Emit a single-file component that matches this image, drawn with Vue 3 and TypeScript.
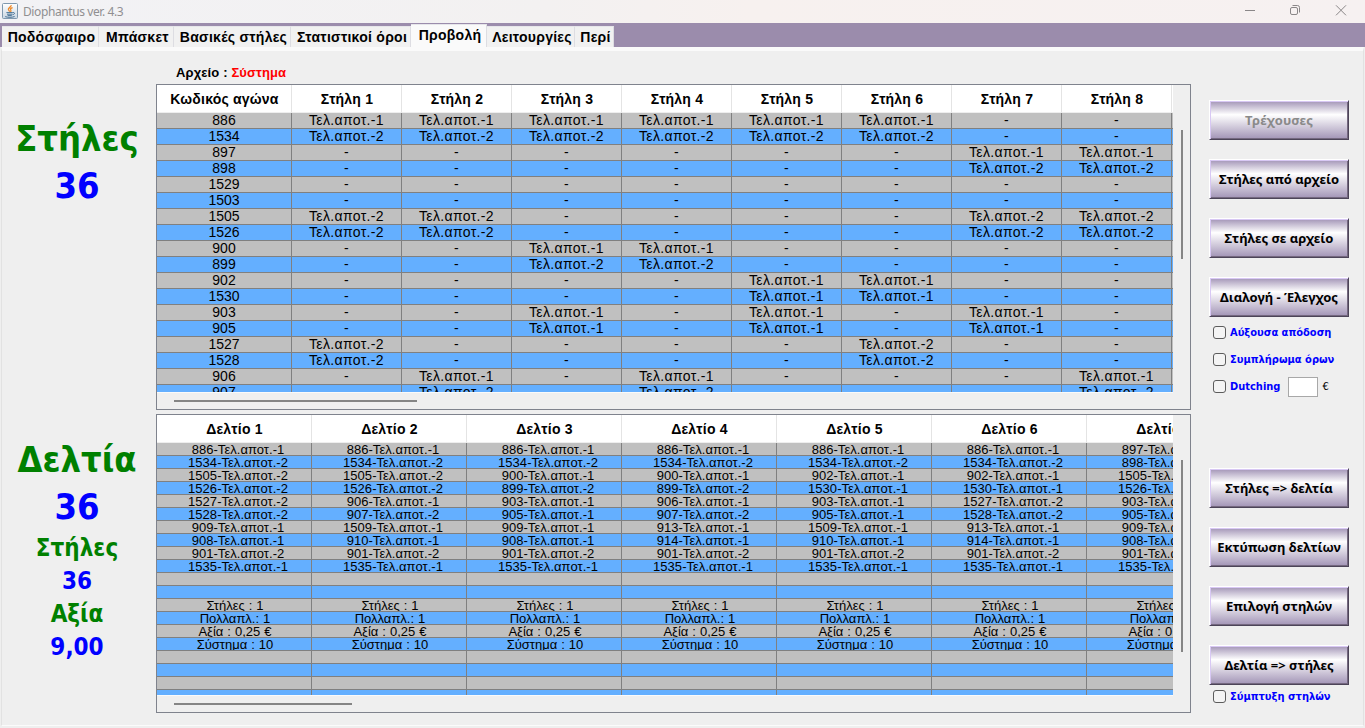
<script setup lang="ts">
const tabs: { label: string; width: number; active?: boolean }[] = [
  { label: 'Ποδόσφαιρο', width: 97 },
  { label: 'Μπάσκετ', width: 75 },
  { label: 'Βασικές στήλες', width: 117 },
  { label: 'Στατιστικοί όροι', width: 120 },
  { label: 'Προβολή', width: 76, active: true },
  { label: 'Λειτουργίες', width: 88 },
  { label: 'Περί', width: 39 },
]

const columnHeads: string[] = ['Κωδικός αγώνα', ...Array.from({ length: 8 }, (_, i) => `Στήλη ${i + 1}`), '']

const picks: [string, string][] = [
  ['886', '111111--'],
  ['1534', '222222--'],
  ['897', '------11'],
  ['898', '------22'],
  ['1529', '--------'],
  ['1503', '--------'],
  ['1505', '22----22'],
  ['1526', '22----22'],
  ['900', '--11----'],
  ['899', '--22----'],
  ['902', '----11--'],
  ['1530', '----11--'],
  ['903', '--1-1-1-'],
  ['905', '--1-1-1-'],
  ['1527', '2----2--'],
  ['1528', '2----2--'],
  ['906', '-1-1---1'],
  ['907', '-2-2---2'],
]
const columnRows: string[][] = picks.map(([code, marks]) => [
  code,
  ...marks.split('').map((m) => (m === '-' ? '-' : `Τελ.αποτ.-${m}`)),
  '',
])

const tickets: string[] = [
  '886-1 1534-2 1505-2 1526-2 1527-2 1528-2 909-1 908-1 901-2 1535-1',
  '886-1 1534-2 1505-2 1526-2 906-1 907-2 1509-1 910-1 901-2 1535-1',
  '886-1 1534-2 900-1 899-2 903-1 905-1 909-1 908-1 901-2 1535-1',
  '886-1 1534-2 900-1 899-2 906-1 907-2 913-1 914-1 901-2 1535-1',
  '886-1 1534-2 902-1 1530-1 903-1 905-1 1509-1 910-1 901-2 1535-1',
  '886-1 1534-2 902-1 1530-1 1527-2 1528-2 913-1 914-1 901-2 1535-1',
  '897-1 898-2 1505-2 1526-2 903-1 905-1 909-1 908-1 901-2 1535-1',
]
const summary: string[] = ['', '', 'Στήλες : 1', 'Πολλαπλ.: 1', 'Αξία : 0,25 €', 'Σύστημα : 10', '', '', '', '']
const ticketColumns: string[][] = tickets.map((t) => [
  ...t.split(' ').map((p) => p.replace('-', '-Τελ.αποτ.-')),
  ...summary,
])
const ticketRows: string[][] = ticketColumns[0].map((_, r) => ticketColumns.map((c) => c[r]))
</script>

<template>
  <div class="window">
    <header class="titlebar">
      <svg class="app-icon" width="16" height="16" viewBox="0 0 16 16">
        <defs>
          <linearGradient id="cup" x1="0" y1="0" x2="0" y2="1">
            <stop offset="0" stop-color="#ffffff" />
            <stop offset="1" stop-color="#c9d6e2" />
          </linearGradient>
        </defs>
        <rect x="0.5" y="0.5" width="15" height="15" rx="1" fill="url(#cup)" stroke="#7f98ae" />
        <path d="M9.2 2.2C9.6 4 5.8 4.8 6.4 6.6C6.7 7.5 7.6 7.9 7.7 8.8M10.6 4.6C8.6 5.2 8 6.1 8.8 7.1C9.2 7.7 8.9 8.3 8.5 8.8" fill="none" stroke="#ee8a2a" stroke-width="1.3" />
        <path d="M4.4 9.6H10.8M5 11.2H10.4M5.6 12.6H9.8M10.8 9.6C13.4 9 12.8 11.6 10.6 11.7M3.2 13.6C5.6 14.6 10.4 14.5 12.6 13.5" fill="none" stroke="#4a7396" stroke-width="1" />
      </svg>
      <span class="title">Diophantus ver. 4.3</span>
      <svg class="win-buttons" width="106" height="14" viewBox="0 0 106 14" fill="none" stroke="#8a8788">
        <path d="M1 7.5H11" />
        <rect x="46.5" y="4.5" width="7" height="7" rx="1.5" />
        <path d="M48.5 2.5H53.5Q55.5 2.5 55.5 4.5V9.5" />
        <path d="M92 2.3L102 12.3M102 2.3L92 12.3" />
      </svg>
    </header>

    <nav class="tabs">
      <div v-for="t in tabs" :key="t.label" class="tab" :class="{ active: t.active }" :style="{ width: t.width + 'px' }">
        {{ t.label }}
      </div>
    </nav>

    <main class="panel">
      <aside class="totals">
        <div class="big green">Στήλες</div>
        <div class="big blue">36</div>
        <div class="big green second">Δελτία</div>
        <div class="big blue">36</div>
        <div class="mid green first">Στήλες</div>
        <div class="mid blue">36</div>
        <div class="mid green">Αξία</div>
        <div class="mid blue">9,00</div>
      </aside>

      <section class="tables">
        <div class="file"><span>Αρχείο : </span><span class="red">Σύστημα</span></div>

        <div class="scrollpane columns">
          <div class="viewport">
            <div class="row head">
              <div v-for="(h, i) in columnHeads" :key="i" class="cell">{{ h }}</div>
            </div>
            <div v-for="(r, i) in columnRows" :key="i" class="row">
              <div v-for="(c, j) in r" :key="j" class="cell">{{ c }}</div>
            </div>
          </div>
          <div class="vtrack"><div class="thumb"></div></div>
          <div class="htrack"><div class="thumb"></div></div>
        </div>

        <div class="scrollpane tickets">
          <div class="viewport">
            <div class="row head">
              <div v-for="n in 7" :key="n" class="cell">Δελτίο {{ n }}</div>
            </div>
            <div v-for="(r, i) in ticketRows" :key="i" class="row" :class="{ pick: i < 10 }">
              <div v-for="(c, j) in r" :key="j" class="cell">{{ c }}</div>
            </div>
          </div>
          <div class="vtrack"><div class="thumb"></div></div>
          <div class="htrack"><div class="thumb"></div></div>
        </div>
      </section>

      <aside class="actions">
        <button class="btn" disabled>Τρέχουσες</button>
        <button class="btn">Στήλες από αρχείο</button>
        <button class="btn">Στήλες σε αρχείο</button>
        <button class="btn b4">Διαλογή - Έλεγχος</button>
        <div class="checks">
          <label class="check"><i class="box"></i><span>Αύξουσα απόδοση</span></label>
          <label class="check"><i class="box"></i><span>Συμπλήρωμα όρων</span></label>
          <label class="check"><i class="box"></i><span>Dutching</span><i class="amount"></i><span class="euro">€</span></label>
        </div>
        <button class="btn">Στήλες =&gt; δελτία</button>
        <button class="btn">Εκτύπωση δελτίων</button>
        <button class="btn">Επιλογή στηλών</button>
        <button class="btn b8">Δελτία =&gt; στήλες</button>
        <label class="check"><i class="box"></i><span>Σύμπτυξη στηλών</span></label>
      </aside>
    </main>
  </div>
</template>

<style>
html,
body {
  margin: 0;
  overflow: hidden;
}
</style>

<style scoped>
.window {
  width: 1365px;
  height: 728px;
  background: #efefef;
  display: flex;
  flex-direction: column;
  overflow: hidden;
  color: #000;
  box-sizing: border-box;
}
.window * {
  box-sizing: border-box;
}
.titlebar {
  height: 23px;
  flex: none;
  display: flex;
  align-items: center;
  padding: 0 15px 0 2px;
  background: linear-gradient(90deg, #f2f2f5 0%, #f3f1f1 40%, #f7f1ef 55%, #f6f1f1 100%);
}
.app-icon {
  margin-top: -1px;
}
.title {
  margin-left: 5px;
  font: 12px/22px "Noto Sans", sans-serif;
  letter-spacing: -0.4px;
  color: #908f91;
  flex: 1;
}
.win-buttons {
  margin-top: -3px;
}
.tabs {
  height: 24px;
  flex: none;
  background: #9b8cac;
  padding-left: 2px;
  display: flex;
  align-items: flex-end;
}
.tab {
  height: 21px;
  padding-left: 3px;
  background: #f1f1f1;
  border-right: 1px solid #dddde2;
  border-top: 1px solid #e6e6ea;
  font: bold 14px/21px "Liberation Sans", sans-serif;
  letter-spacing: 0.27px;
  text-align: center;
  white-space: nowrap;
}
.tab.active {
  height: 23px;
  background: #fafafa;
}
.panel {
  flex: 1;
  display: flex;
  margin: 0 1px 2px 1px;
  border: 1px solid #e2e2e2;
  border-top: 4px solid #fafafa;
  border-bottom-color: #fbfbfb;
}
.totals {
  width: 154px;
  flex: none;
  text-align: center;
  font-family: "DejaVu Sans Condensed", "DejaVu Sans", sans-serif;
  font-stretch: condensed;
  font-weight: bold;
  padding: 65px 4px 0 0;
}
.big {
  font-size: 36px;
  line-height: 46px;
  height: 47px;
}
.mid {
  font-size: 24px;
  line-height: 33px;
  height: 33px;
}
.first {
  margin-top: 1px;
}
.second {
  margin-top: 227px;
}
.green {
  color: #008000;
}
.blue {
  color: #0000ff;
}
.tables {
  width: 1035px;
  flex: none;
  padding-top: 14px;
}
.file {
  height: 19px;
  padding-left: 20px;
  font: bold 13px/16px "Liberation Sans", sans-serif;
  letter-spacing: 0.13px;
  white-space: pre;
}
.red {
  color: #f00;
}
.scrollpane {
  border: 1px solid #7f838d;
  display: grid;
  grid-template-columns: 1016px 1fr;
  font-family: "Liberation Sans", sans-serif;
}
.columns {
  height: 326px;
  grid-template-rows: 307px 1fr;
}
.tickets {
  height: 299px;
  margin-top: 4px;
  grid-template-rows: 280px 1fr;
}
.viewport {
  overflow: hidden;
  box-shadow: 0 1px 0 #fafafa;
}
.row {
  display: flex;
  width: max-content;
  background: #c0c0c0;
}
.row:nth-child(odd) {
  background: #64afff;
}
.cell {
  border-right: 1px solid #808080;
  border-bottom: 1px solid #808080;
  text-align: center;
  white-space: nowrap;
  overflow: hidden;
}
.columns .cell {
  width: 110px;
  height: 16px;
  font-size: 14px;
  line-height: 15px;
  letter-spacing: 0.35px;
}
.columns .cell:first-child {
  width: 135px;
  letter-spacing: 0;
}
.tickets .cell {
  width: 155px;
  height: 13px;
  padding-left: 2px;
  font-size: 13px;
  line-height: 13px;
  letter-spacing: 0;
  word-spacing: 0.4px;
}
.tickets .pick .cell {
  padding-left: 8px;
  letter-spacing: 0.03px;
}
.row.head {
  background: #fff;
}
.row.head .cell,
.row.head .cell:first-child {
  height: 28px;
  padding-left: 1px;
  font-size: 14px;
  line-height: 29px;
  font-weight: bold;
  letter-spacing: 0.2px;
  word-spacing: 0;
  border-bottom: 1px solid #eee;
  border-right: 1px solid #e4e4e4;
}
.vtrack {
  padding-left: 8px;
}
.vtrack .thumb {
  width: 2px;
  background: #858585;
}
.htrack {
  padding: 8px 0 0 17px;
}
.htrack .thumb {
  height: 2px;
  background: #858585;
}
.columns .vtrack .thumb {
  height: 129px;
  margin-top: 45px;
}
.columns .htrack .thumb {
  width: 243px;
}
.tickets .vtrack .thumb {
  height: 192px;
  margin-top: 45px;
}
.tickets .htrack .thumb {
  width: 178px;
}
.actions {
  flex: 1;
  padding: 49px 0 0 18px;
  display: flex;
  flex-direction: column;
  align-items: flex-start;
}
.btn {
  width: 140px;
  height: 40px;
  flex: none;
  margin: 0 0 19px;
  padding: 0;
  border: 1px solid #fff;
  border-right: 1px solid #4c4458;
  border-bottom: 1px solid #4c4458;
  box-shadow: inset 1px 1px 0 #d8c8f4, inset -1px -1px 0 #74687f;
  background: linear-gradient(180deg, #a294b6 0%, #ffffff 36%, #a294b6 100%);
  font: bold 13px/36px "Noto Sans", sans-serif;
  color: #000;
  white-space: nowrap;
}
.btn:disabled {
  color: #8a8a8a;
  letter-spacing: 0.1px;
}
.b4 {
  margin-bottom: 2px;
}
.checks {
  height: 149px;
}
.check {
  display: flex;
  align-items: center;
  height: 27px;
  padding-left: 4px;
  font: bold 11px/27px "DejaVu Sans Condensed", "DejaVu Sans", sans-serif;
  font-stretch: condensed;
  color: #0000ff;
  white-space: nowrap;
}
.box {
  width: 13px;
  height: 13px;
  margin-right: 4px;
  border: 1px solid #5c5c5c;
  border-radius: 3px;
  background: #f4f4f4;
}
.amount {
  width: 30px;
  height: 20px;
  margin: 0 4px 0 8px;
  border: 1px solid #a8a8a8;
  background: #fff;
}
.euro {
  color: #000;
  font-weight: normal;
}
.b8 {
  margin-bottom: -2px;
}
</style>
